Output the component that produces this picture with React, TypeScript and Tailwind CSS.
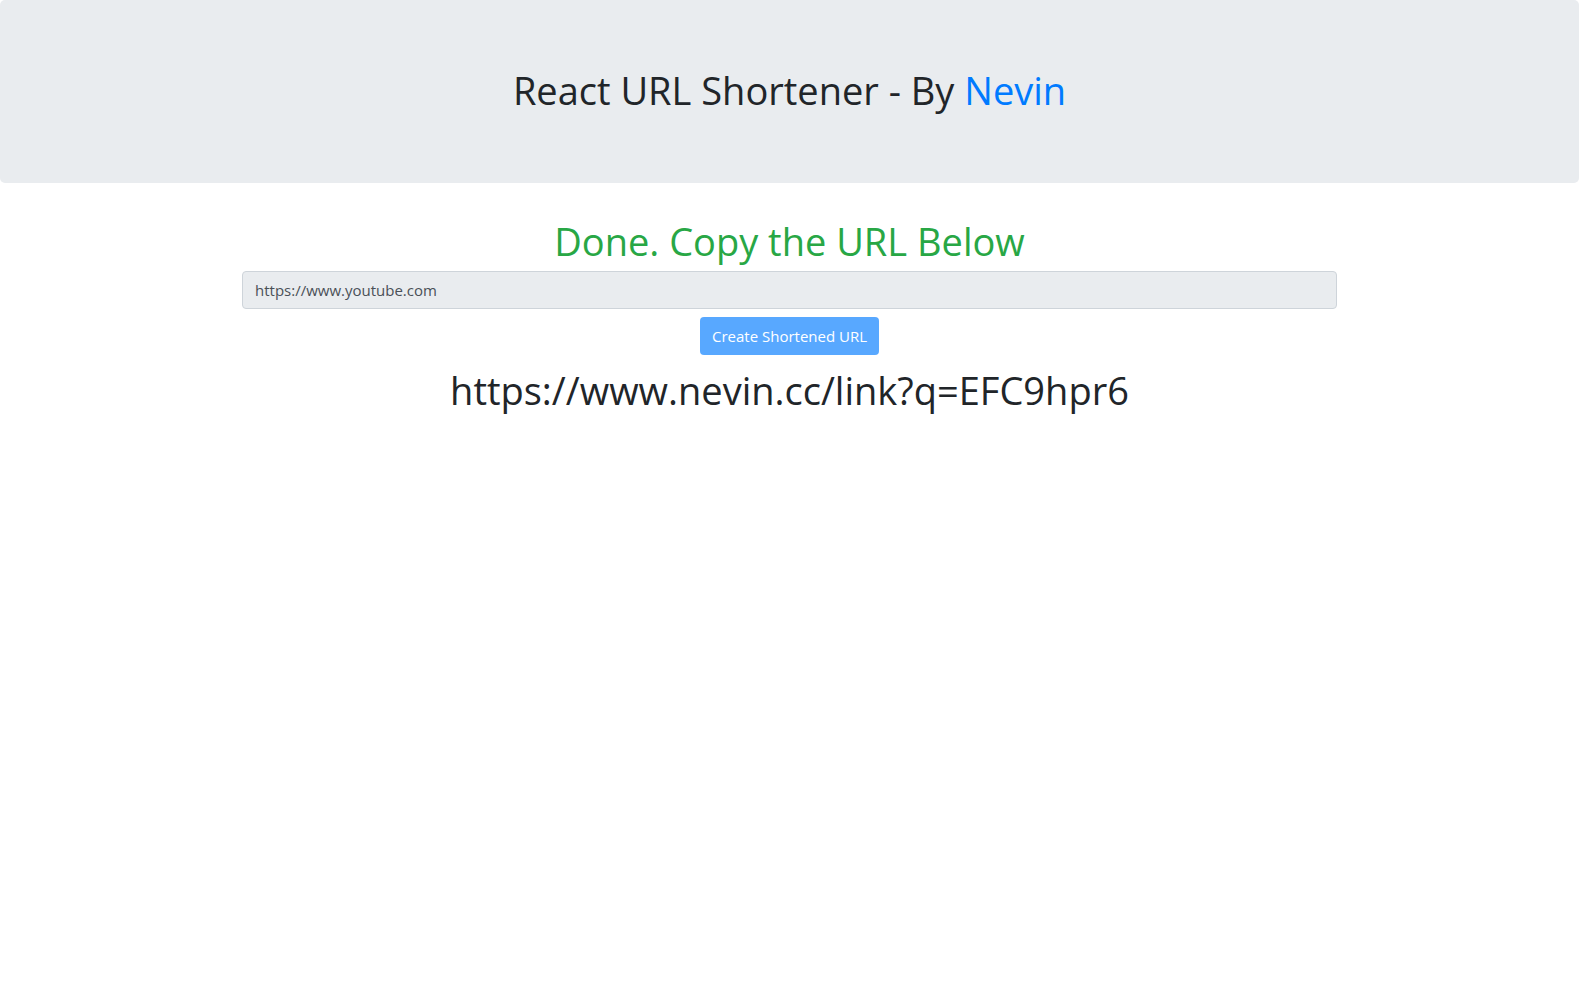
export default function App() {
  return (
    <div className="min-h-screen bg-white font-['Open_Sans',sans-serif] text-[#212529]">
      <div className="mb-8 rounded-[5px] bg-[#e9ecef] px-8 pt-[66px] pb-[69px] text-center">
        <h1 className="text-[38px] leading-[48px] font-normal">
          React URL Shortener - By <span className="text-[#007bff]">Nevin</span>
        </h1>
      </div>

      <div className="mx-auto flex w-[1095px] flex-col items-center">
        <h1 className="mt-[2px] mb-[6px] text-[38px] leading-[48px] text-[#28a745]">Done. Copy the URL Below</h1>
        <input
          readOnly
          value="https://www.youtube.com"
          className="h-[38px] w-full rounded-[4px] border border-[#ced4da] bg-[#e9ecef] px-3 text-[15px] text-[#495057] outline-none"
        />
        <button className="mt-2 h-[38px] rounded-[4px] bg-[#007bff] px-3 text-[15px] text-white opacity-65">
          Create Shortened URL
        </button>
        <h1 className="mt-[11px] text-[38px] leading-[48px]">https://www.nevin.cc/link?q=EFC9hpr6</h1>
      </div>
    </div>
  )
}
